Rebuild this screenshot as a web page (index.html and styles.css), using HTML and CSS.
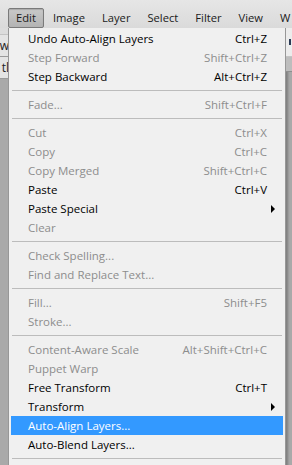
FILE: index.html
```html
<!DOCTYPE html>
<html lang="en">
<head>
  <meta charset="UTF-8">
  <title>Edit menu</title>
  <link rel="stylesheet" href="styles.css">
</head>
<body>

<nav class="menubar">
  <span class="menu-title active">Edit</span>
  <span class="menu-title">Image</span>
  <span class="menu-title">Layer</span>
  <span class="menu-title">Select</span>
  <span class="menu-title">Filter</span>
  <span class="menu-title">View</span>
  <span class="menu-title">W</span>
</nav>

<div class="workspace">
  <div class="side left">
    <div class="opt-bar top"></div>
    <div class="opt-bar"><span>w</span></div>
    <div class="opt-bar"><span>tl</span></div>
  </div>

  <ul class="dropdown">
    <li class="item"><span>Undo Auto-Align Layers</span><span class="key">Ctrl+Z</span></li>
    <li class="item off"><span>Step Forward</span><span class="key">Shift+Ctrl+Z</span></li>
    <li class="item"><span>Step Backward</span><span class="key">Alt+Ctrl+Z</span></li>
    <li class="sep"></li>
    <li class="item off"><span>Fade...</span><span class="key">Shift+Ctrl+F</span></li>
    <li class="sep"></li>
    <li class="item off"><span>Cut</span><span class="key">Ctrl+X</span></li>
    <li class="item off"><span>Copy</span><span class="key">Ctrl+C</span></li>
    <li class="item off"><span>Copy Merged</span><span class="key">Shift+Ctrl+C</span></li>
    <li class="item"><span>Paste</span><span class="key">Ctrl+V</span></li>
    <li class="item sub"><span>Paste Special</span></li>
    <li class="item off"><span>Clear</span></li>
    <li class="sep"></li>
    <li class="item off"><span>Check Spelling...</span></li>
    <li class="item off"><span>Find and Replace Text...</span></li>
    <li class="sep"></li>
    <li class="item off"><span>Fill...</span><span class="key">Shift+F5</span></li>
    <li class="item off"><span>Stroke...</span></li>
    <li class="sep"></li>
    <li class="item off"><span>Content-Aware Scale</span><span class="key">Alt+Shift+Ctrl+C</span></li>
    <li class="item off"><span>Puppet Warp</span></li>
    <li class="item"><span>Free Transform</span><span class="key">Ctrl+T</span></li>
    <li class="item sub"><span>Transform</span></li>
    <li class="item hover"><span>Auto-Align Layers...</span></li>
    <li class="item"><span>Auto-Blend Layers...</span></li>
    <li class="sep"></li>
  </ul>

  <div class="side right">
    <div class="opt-bar top"><i class="grip"></i></div>
    <div class="opt-bar dark"></div>
  </div>
</div>

</body>
</html>
```

FILE: styles.css
```css
body {
  margin: 0;
  width: 292px;
  height: 465px;
  overflow: hidden;
  background: #a9a9a9;
  font-family: "Open Sans", "Noto Sans", sans-serif;
  font-size: 11.5px;
  color: #000;
}
.menubar {
  display: flex;
  align-items: center;
  height: 28px;
  padding-left: 8px;
  background: linear-gradient(#e6e6e6, #dadada);
  white-space: nowrap;
  overflow: hidden;
}
.menu-title {
  padding: 1px 7px 2px;
  margin-right: 1px;
  margin-top: 7px;
  border: 1px solid transparent;
  border-radius: 2px;
  color: #1a1a1a;
  font-size: 11.2px;
}
.menu-title.active {
  background: linear-gradient(#c9c9c9, #b3b3b3);
  border-color: #7a7a7a;
  box-shadow: inset 0 1px 1px rgba(0, 0, 0, 0.15);
}
.workspace {
  display: flex;
}
.side {
  width: 8px;
  overflow: hidden;
}
.side.right {
  flex: 1;
}
.opt-bar {
  height: 21px;
  background: #e4e4e4;
  border-bottom: 1px solid #9a9a9a;
  display: flex;
  justify-content: flex-end;
  align-items: center;
  white-space: nowrap;
  color: #222;
  font-size: 12px;
}
.opt-bar.top {
  height: 6px;
  background: #dcdcdc;
  border-bottom: 1px solid #c4c4c4;
}
.opt-bar span {
  margin-right: -1px;
}
.side.right .opt-bar.top {
  height: 28px;
  background: #ececec;
  justify-content: flex-start;
  padding-left: 3px;
}
.grip {
  width: 2px;
  height: 6px;
  background: #2a3a55;
}
.opt-bar.dark {
  height: 14px;
  background: #bdbdbd;
  border-bottom: 1px solid #8e8e8e;
}
.dropdown {
  list-style: none;
  margin: 0;
  padding: 1px 2px 0;
  width: 272px;
  height: 440px;
  background: #f0f0f0;
  border: 1px solid #979797;
  border-top: none;
  box-shadow: 2px 2px 2px rgba(0, 0, 0, 0.25);
}
.item {
  display: flex;
  justify-content: space-between;
  align-items: center;
  height: 19px;
  padding: 0 16px 0 17px;
  white-space: nowrap;
}
.item.off {
  color: #8d8d8d;
}
.item.sub {
  position: relative;
}
.item.sub::after {
  content: "";
  position: absolute;
  right: 8px;
  top: 6px;
  border-left: 4px solid #000;
  border-top: 4px solid transparent;
  border-bottom: 4px solid transparent;
}
.item.hover {
  background: #3399ff;
  color: #fff;
}
.sep {
  height: 1px;
  margin: 4px 1px;
  background: #bcbcbc;
}
```
